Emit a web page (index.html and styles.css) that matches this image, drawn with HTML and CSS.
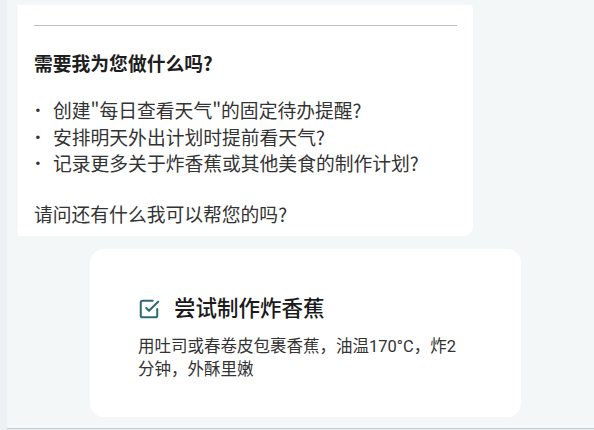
FILE: index.html
```html
<!DOCTYPE html>
<html lang="zh">
<head>
    <meta charset="UTF-8">
    <meta name="viewport" content="width=device-width, initial-scale=1.0">
    <title>聊天</title>
    <link rel="stylesheet" href="styles.css">
</head>
<body>
    <div class="chat">
        <!-- Assistant reply -->
        <div class="bubble">
            <hr class="divider">
            <p class="ask">需要我为您做什么吗?</p>
            <ul class="options">
                <li><span class="dot">•</span>创建"每日查看天气"的固定待办提醒?</li>
                <li><span class="dot">•</span>安排明天外出计划时提前看天气?</li>
                <li><span class="dot">•</span>记录更多关于炸香蕉或其他美食的制作计划?</li>
            </ul>
            <p class="closing">请问还有什么我可以帮您的吗?</p>
        </div>

        <!-- Todo card -->
        <div class="todo-card">
            <div class="todo-title">
                <svg class="todo-icon" viewBox="0 0 24 24" fill="none" stroke="currentColor" stroke-width="2.2" stroke-linecap="round" stroke-linejoin="round">
                    <polyline points="9 11 12 14 22 4"/>
                    <path d="M21 12v7a2 2 0 0 1-2 2H5a2 2 0 0 1-2-2V5a2 2 0 0 1 2-2h11"/>
                </svg>
                <span>尝试制作炸香蕉</span>
            </div>
            <p class="todo-desc">用吐司或春卷皮包裹香蕉，油温170°C，炸2分钟，外酥里嫩</p>
        </div>
    </div>
</body>
</html>
```

FILE: styles.css
```css
html, body {
    margin: 0;
    height: 100%;
}
body {
    font-family: Roboto, "Noto Sans CJK SC", sans-serif;
    background: #eef1f3;
    color: #2b2b2b;
}
.chat {
    margin-left: 7px;
    height: 429px;
    box-sizing: border-box;
    background: #f4f7f8;
    border-bottom: 1px solid #c3ccd1;
    padding-top: 5px;
    display: flex;
    flex-direction: column;
    align-items: flex-start;
}
.bubble {
    margin-left: 11px;
    width: 455px;
    box-sizing: border-box;
    background: #ffffff;
    border-radius: 0 4px 10px 0;
    padding: 20px 16px 9px 16px;
    font-family: "Noto Sans CJK SC", sans-serif;
}
.divider {
    border: 0;
    border-top: 1px solid #bdbdbd;
    margin: 0 0 24px 0;
}
.ask {
    margin: 0;
    font-size: 18.8px;
    line-height: 26px;
    font-weight: bold;
    color: #1e1e1e;
}
.options {
    list-style: none;
    margin: 21px 0 24px 0;
    padding: 0;
    font-size: 18.8px;
    line-height: 26.5px;
    color: #333333;
}
.options li {
    display: flex;
}
.dot {
    width: 18px;
    font-family: Roboto, sans-serif;
    font-size: 17px;
    padding-left: 1px;
}
.closing {
    margin: 0;
    font-size: 18.8px;
    line-height: 26px;
    color: #333333;
}
.todo-card {
    margin: 13px 0 0 83px;
    width: 431px;
    box-sizing: border-box;
    background: #ffffff;
    border-radius: 14px;
    padding: 45px 52px 36px 48px;
}
.todo-title {
    display: flex;
    align-items: center;
    gap: 14px;
    font-size: 21.5px;
    line-height: 30px;
    font-weight: 500;
    color: #1a1a1a;
}
.todo-icon {
    width: 22px;
    height: 22px;
    color: #2f6a74;
}
.todo-desc {
    margin: 11px 0 0 0;
    font-size: 16.5px;
    line-height: 23px;
    color: #333333;
}
```
